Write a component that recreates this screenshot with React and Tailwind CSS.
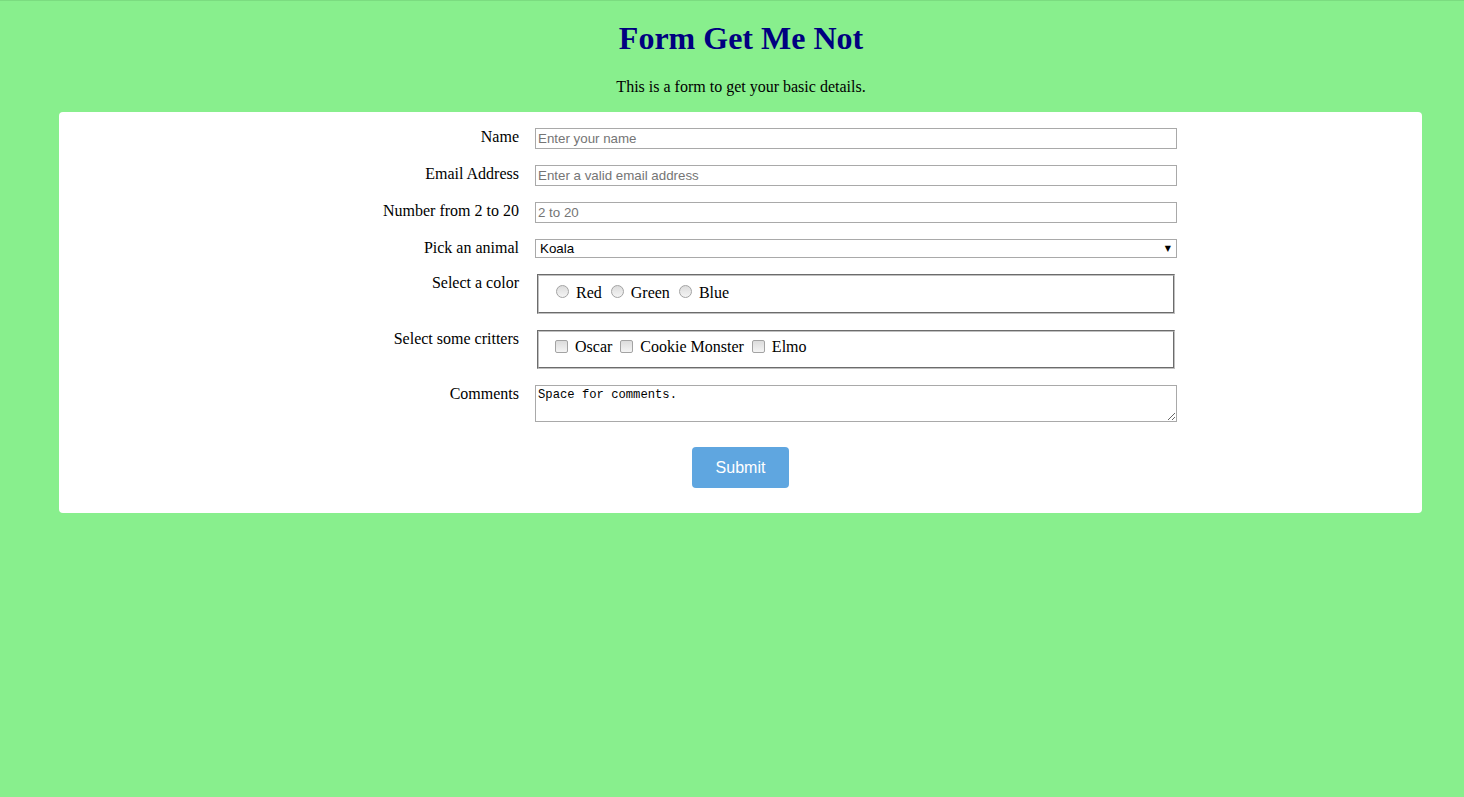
import { useState } from 'react'

const ROWS = [
  { label: 'Name', placeholder: 'Enter your name', type: 'text' },
  { label: 'Email Address', placeholder: 'Enter a valid email address', type: 'email' },
  { label: 'Number from 2 to 20', placeholder: '2 to 20', type: 'number' },
]

const ANIMALS = ['Koala', 'Kangaroo', 'Wombat', 'Platypus']
const COLORS = ['Red', 'Green', 'Blue']
const CRITTERS = ['Oscar', 'Cookie Monster', 'Elmo']

const labelCls = "w-[460px] shrink-0 text-right text-[16px] leading-[normal]"
const inputCls = "w-[642px] h-[21px] border border-[#a9a9a9] bg-white px-[2px] text-[13.33px] font-['Liberation_Sans',Arial,sans-serif] text-black placeholder:text-[#757575] outline-none"
const fieldsetCls = "w-[638px] mx-[2px] border-2 [border-style:groove] border-[#c0c0c0] pt-[5.6px] px-[12px] text-[16px] leading-[normal]"
const radioCls = "appearance-none inline-block align-baseline w-[13px] h-[13px] mt-[3px] mr-[3px] ml-[5px] rounded-full border border-[#a3a3a3] bg-gradient-to-b from-[#dcdcdc] to-[#f4f4f4]"
const checkCls = "appearance-none inline-block align-[-1px] w-[13px] h-[13px] mt-[3px] mr-[3px] ml-[4px] rounded-[2px] border border-[#a3a3a3] bg-gradient-to-b from-[#dcdcdc] to-[#f4f4f4]"

export default function App() {
  const [animal, setAnimal] = useState('Koala')

  return (
    <div className="min-h-[797px] bg-[#88ef8d] border-t border-[#7bdc80] font-['Liberation_Serif','Times_New_Roman',serif] text-black">
      <h1 className="mt-[19px] mb-[21px] text-center text-[32px] font-bold leading-[normal] text-[#000080] pl-[18px]">
        Form Get Me Not
      </h1>
      <p className="mb-4 text-center text-[16px] leading-[normal] pl-[18px]">This is a form to get your basic details.</p>

      <form className="ml-[59px] w-[1363px] rounded-[4px] bg-white pt-4 pb-[25px] flex flex-col">
        {ROWS.map(row => (
          <div key={row.label} className="flex items-start gap-4 mb-4">
            <label className={labelCls}>{row.label}</label>
            <input type={row.type === 'number' ? 'text' : row.type} placeholder={row.placeholder} className={inputCls} />
          </div>
        ))}

        <div className="flex items-start gap-4 mb-4">
          <label className={labelCls}>Pick an animal</label>
          <div className="relative w-[642px] h-[19px]">
            <select
              value={animal}
              onChange={e => setAnimal(e.target.value)}
              className="block appearance-none w-full h-full border border-[#a9a9a9] bg-white pl-[4px] text-[13.33px] leading-[17px] font-['Liberation_Sans',Arial,sans-serif] text-black outline-none"
            >
              {ANIMALS.map(a => <option key={a}>{a}</option>)}
            </select>
            <span className="pointer-events-none absolute right-[6px] top-[3px] text-[8px] leading-[13px] font-['DejaVu_Sans',sans-serif]">▼</span>
          </div>
        </div>

        <div className="flex items-start gap-4 mb-4">
          <label className={labelCls}>Select a color</label>
          <fieldset className={`${fieldsetCls} pb-[10px]`}>
            {COLORS.map(c => (
              <span key={c}>
                <input type="radio" name="color" className={radioCls} />{' '}{c}{' '}
              </span>
            ))}
          </fieldset>
        </div>

        <div className="flex items-start gap-4 mb-4">
          <label className={labelCls}>Select some critters</label>
          <fieldset className={`${fieldsetCls} pb-[11px]`}>
            {CRITTERS.map(c => (
              <span key={c}>
                <input type="checkbox" className={checkCls} />{' '}{c}{' '}
              </span>
            ))}
          </fieldset>
        </div>

        <div className="flex items-start gap-4">
          <label className={labelCls}>Comments</label>
          <textarea
            defaultValue="Space for comments."
            className="w-[642px] h-[37px] border border-[#a9a9a9] px-[2px] py-[2px] text-[12.2px] leading-[15px] font-['Liberation_Mono','DejaVu_Sans_Mono',monospace] resize outline-none"
          />
        </div>

        <button
          type="button"
          className="mt-[25px] mx-auto w-[97px] h-[41px] rounded-[4px] bg-[#5fa6e0] text-white text-[16px] font-['Liberation_Sans',Arial,sans-serif]"
        >
          Submit
        </button>
      </form>
    </div>
  )
}
